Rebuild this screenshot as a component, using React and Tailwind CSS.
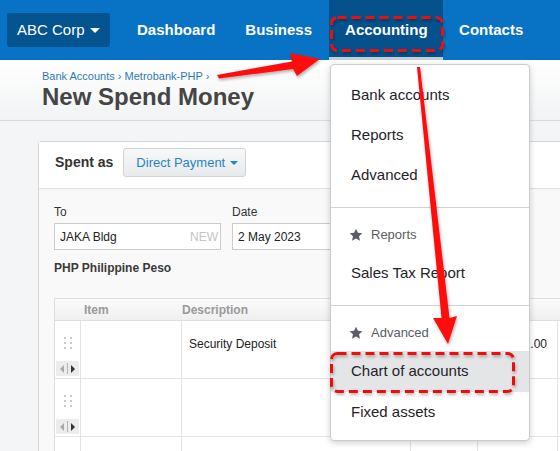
import { ChevronDown } from "lucide-react";

function Star() {
  return (
    <svg width="14" height="14" viewBox="0 0 24 24" className="shrink-0">
      <path
        d="M12 1.2l3.3 7 7.6.8-5.7 5.2 1.6 7.6L12 18l-6.8 3.8 1.6-7.6L1.1 9l7.6-.8z"
        fill="#5a5d63"
      />
    </svg>
  );
}

function MenuItem({ children, active, h = "h-[40px]" }) {
  return (
    <div
      className={`${h} flex items-center px-[20px] text-[15px] text-[#1f2329] ${
        active ? "bg-[#e4e5e7]" : ""
      }`}
    >
      {children}
    </div>
  );
}

function MenuHeader({ children }) {
  return (
    <div className="h-[45px] pt-[20px] px-[18px] flex items-start gap-[8px] text-[13px] leading-[14px] text-[#5a5d63]">
      <Star />
      <span>{children}</span>
    </div>
  );
}

function Handle() {
  return (
    <div className="h-full flex flex-col items-center justify-between pt-[16px] pb-[2px]">
      <div className="grid grid-cols-2 gap-x-[4px] gap-y-[3px]">
        {[0, 1, 2, 3, 4, 5].map((i) => (
          <span key={i} className="w-[2px] h-[2px] bg-[#c9cbcd]" />
        ))}
      </div>
      <div className="w-[23px] h-[15px] bg-[#ececec] flex items-center justify-center gap-[3px]">
        <span className="w-0 h-0 border-y-[4px] border-y-transparent border-r-[4px] border-r-[#a9a9a9]" />
        <span className="w-[1px] h-[11px] bg-[#b5b5b5]" />
        <span className="w-0 h-0 border-y-[4px] border-y-transparent border-l-[4px] border-l-[#333]" />
      </div>
    </div>
  );
}

export default function App() {
  const rows = [
    { desc: "Security Deposit", price: "1.00" },
    { desc: "", price: "" },
    { desc: "", price: "" },
  ];

  return (
    <div className="relative w-[560px] h-[451px] overflow-hidden bg-[#f4f5f6] font-['Liberation_Sans',Arial,sans-serif]">
      {/* top nav */}
      <div className="h-[60px] bg-[#0872c4] flex items-center pl-[7px]">
        <div className="h-[34px] w-[103px] rounded-[3px] bg-[#04548f] flex items-center pl-[10px] gap-[5px] text-white text-[15px]">
          ABC Corp
          <span className="w-0 h-0 border-x-[5px] border-x-transparent border-t-[5px] border-t-white mt-[1px]" />
        </div>
        <div className="flex h-full ml-[11px] text-white text-[15px] font-bold">
          <div className="px-[16px] flex items-center">Dashboard</div>
          <div className="pl-[14px] pr-[17px] flex items-center">Business</div>
          <div className="flex flex-col w-[114px] bg-[#04518c]">
            <div className="flex-1 flex items-center px-[16px] pt-[3px]">Accounting</div>
            <div className="h-[3px] bg-[#c4ccd4]" />
          </div>
          <div className="px-[16px] flex items-center">Contacts</div>
        </div>
      </div>

      {/* title area */}
      <div className="h-[61px] border-b border-[#d9dadb] bg-gradient-to-b from-[#ffffff] to-[#f2f3f4] pl-[42px] pt-[10px]">
        <div className="text-[11px] text-[#2c7ab8] leading-[13px]">
          Bank Accounts › Metrobank-PHP ›
        </div>
        <div className="text-[24px] font-bold text-[#454545] leading-[26px] mt-[1px]">
          New Spend Money
        </div>
      </div>

      {/* content */}
      <div className="pl-[38px] pt-[20px]">
        <div className="w-[640px] border border-[#d6d6d6] rounded-[3px] bg-[#f9f9f9]">
          <div className="h-[47px] bg-white border-b border-[#e0e0e0] flex items-start pt-[6px] pl-[16px] gap-[10px]">
            <div className="h-[29px] flex items-center text-[14px] font-bold text-[#333]">
              Spent as
            </div>
            <div className="h-[29px] w-[123px] rounded-[3px] border border-[#cfd3d6] bg-gradient-to-b from-[#f7f8f9] to-[#e7eaec] flex items-center pl-[12px] gap-[5px] text-[13px] text-[#1f86c6]">
              Direct Payment
              <span className="w-0 h-0 border-x-[4px] border-x-transparent border-t-[4px] border-t-[#1f86c6] mt-[1px]" />
            </div>
          </div>

          <div className="pl-[15px] pt-[16px]">
            <div className="flex gap-[11px]">
              <div className="w-[167px]">
                <div className="text-[12px] leading-[14px] text-[#333]">To</div>
                <div className="mt-[4px] h-[27px] bg-white border border-[#cbcbcb] flex items-center justify-between pl-[5px] pr-[2px] text-[12px] text-[#222]">
                  JAKA Bldg
                  <span className="text-[#c4c4c4]">NEW</span>
                </div>
              </div>
              <div className="w-[150px]">
                <div className="text-[12px] leading-[14px] text-[#333]">Date</div>
                <div className="mt-[4px] h-[27px] bg-white border border-[#cbcbcb] flex items-center pl-[5px] text-[12px] text-[#222]">
                  2 May 2023
                </div>
              </div>
            </div>
            <div className="mt-[11px] text-[12px] leading-[14px] font-bold text-[#3a3a3a]">
              PHP Philippine Peso
            </div>

            <div className="mt-[23px] border border-[#dedede] bg-white">
              <div className="h-[22px] flex bg-gradient-to-b from-[#fbfbfb] to-[#efefef] border-b border-[#dedede] text-[12px] font-bold text-[#9a9a9a]">
                <div className="w-[26px]" />
                <div className="w-[101px] pl-[3px] flex items-center">Item</div>
                <div className="w-[229px] flex items-center">Description</div>
                <div className="w-[67px]" />
                <div className="w-[80px]" />
              </div>
              {rows.map((r, i) => (
                <div key={i} className="h-[58px] flex border-b border-[#e3e3e3] text-[12px] text-[#222]">
                  <div className="w-[26px] border-r border-[#e3e3e3]">
                    <Handle />
                  </div>
                  <div className="w-[101px] border-r border-[#e3e3e3]" />
                  <div className="w-[229px] border-r border-[#e3e3e3] pl-[7px] pt-[14px]">
                    {r.desc}
                  </div>
                  <div className="w-[67px] border-r border-[#e3e3e3]" />
                  <div className="w-[80px] border-r border-[#e3e3e3] pr-[10px] pt-[14px] text-right">
                    {r.price}
                  </div>
                </div>
              ))}
            </div>
          </div>
        </div>
      </div>

      {/* dropdown menu */}
      <div className="absolute left-[330px] top-[64px] w-[200px] bg-white border border-[#c9ccd0] rounded-[4px] shadow-[0_2px_6px_rgba(0,0,0,0.18)]">
        <div className="pt-[10px] pb-[12px]">
          <MenuItem>Bank accounts</MenuItem>
          <MenuItem>Reports</MenuItem>
          <MenuItem>Advanced</MenuItem>
        </div>
        <div className="border-t border-[#cfd2d5] pb-[12px]">
          <MenuHeader>Reports</MenuHeader>
          <MenuItem>Sales Tax Report</MenuItem>
        </div>
        <div className="border-t border-[#cfd2d5] pb-[8px]">
          <MenuHeader>Advanced</MenuHeader>
          <MenuItem active h="h-[41px]">
            Chart of accounts
          </MenuItem>
          <MenuItem>Fixed assets</MenuItem>
        </div>
      </div>

      {/* annotations */}
      <svg
        className="absolute left-0 top-0 pointer-events-none"
        width="560"
        height="451"
        viewBox="0 0 560 451"
      >
        <defs>
          <filter id="sh" x="-20%" y="-20%" width="140%" height="140%">
            <feDropShadow dx="1" dy="2" stdDeviation="1.5" floodColor="#000" floodOpacity="0.3" />
          </filter>
        </defs>
        <g filter="url(#sh)">
          <rect
            x="331.5"
            y="17.5"
            width="111"
            height="33"
            rx="6"
            fill="none"
            stroke="#ee1111"
            strokeWidth="3"
            strokeDasharray="9 5"
          />
          <rect
            x="331.5"
            y="353.5"
            width="182"
            height="38"
            rx="6"
            fill="none"
            stroke="#ee1111"
            strokeWidth="3"
            strokeDasharray="9 5"
          />
          <polygon
            points="217,75 292,61.5 290,53 320,59 297,76 293,69 219,78.5"
            fill="#ff0a0a"
          />
          <polygon
            points="417,67 420,67 449.5,318 457,316 448,344 433,318 441.5,318"
            fill="#ff0a0a"
          />
        </g>
      </svg>
    </div>
  );
}
